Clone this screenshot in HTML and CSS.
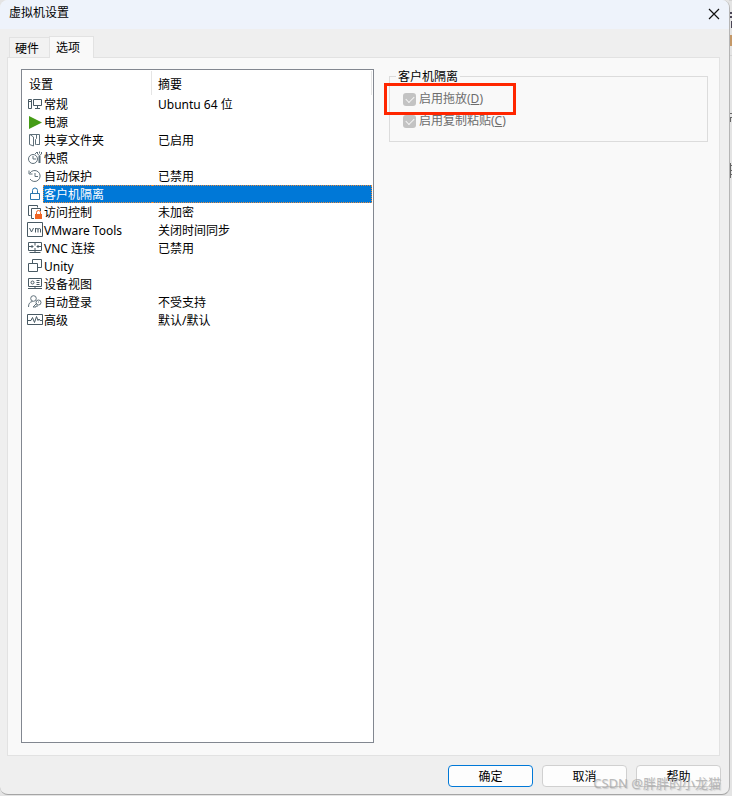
FILE: index.html
```html
<!DOCTYPE html>
<html lang="zh-CN">
<head>
<meta charset="utf-8">
<meta name="viewport" content="width=device-width">
<title>虚拟机设置</title>
<link rel="stylesheet" href="styles.css">
</head>
<body>
<svg class="backdrop" width="4" height="796" viewBox="0 0 4 796" aria-hidden="true"><path fill="#d3d3d3" d="M1 55h3v1H1zM1 0h3v1H1z"/><path fill="#4b4656" d="M1 12h3v2H1zM1 16h3v2H1zM1 21h1v7H1zM3 21h1v7H3z"/><path fill="#c49868" d="M2 35h2v11H2z"/><path fill="#666" d="M1 113h3v1H1zM0 117h4v1H0zM2 118h1v4H2zM1 122h1v2H1zM1 139h1v12H1zM0 165h4v1H0zM0 170h4v1H0zM0 174h4v1H0zM2 163h1v15H2z"/></svg>
<main class="window">
  <header class="titlebar">
    <h1 class="title">虚拟机设置</h1>
    <button class="close" type="button" aria-label="关闭"><svg width="12" height="12" viewBox="0 0 12 12"><path d="M1 1l10 10M11 1L1 11" fill="none" stroke="#111" stroke-width="1.2"/></svg></button>
  </header>
  <nav class="tabs" role="tablist">
    <button class="tab" type="button" role="tab" aria-selected="false">硬件</button>
    <button class="tab tab-active" type="button" role="tab" aria-selected="true">选项</button>
  </nav>
  <section class="panel">
    <div class="list">
      <table class="options">
        <thead><tr><th class="name">设置</th><th>摘要</th></tr></thead>
        <tbody>
          <tr><td class="name"><div class="item"><svg class="icon" viewBox="0 0 16 16"><path d="M1.500 3.500h3v9h-3zM6.500 3.500h8v6h-8zM10.500 9.500v3M8 12.500h5M2 5.500h2"/></svg><span>常规</span></div></td><td>Ubuntu 64 位</td></tr>
          <tr><td class="name"><div class="item"><svg class="icon" viewBox="0 0 16 16"><path class="green" d="M2 2v13l13-6.500z"/></svg><span>电源</span></div></td><td></td></tr>
          <tr><td class="name"><div class="item"><svg class="icon soft" viewBox="0 0 16 16"><path d="M2.500 2.500h10v10h-3M2.500 2.500v10l4 1.500V5L3 2.500M9.500 2.500v4l-1 1v5h1M12.500 4v8.500"/></svg><span>共享文件夹</span></div></td><td>已启用</td></tr>
          <tr><td class="name"><div class="item"><svg class="icon soft" viewBox="0 0 16 16"><circle cx="6" cy="9" r="4.500"/><path d="M6 6v3h3M8 4l2-2M10.500 2v2l2 1.500 2-1.500V2M12.500 1.500v2"/><path d="M12.500 6v7" stroke-width="2"/></svg><span>快照</span></div></td><td></td></tr>
          <tr><td class="name"><div class="item"><svg class="icon soft" viewBox="0 0 16 16"><path d="M3 5a5.500 5.500 0 1 1 0 6M2 2.500V6h3.500M8 5v3.500h3"/></svg><span>自动保护</span></div></td><td>已禁用</td></tr>
          <tr class="selected" aria-selected="true"><td class="name"><div class="item"><svg class="icon blue" viewBox="0 0 16 16"><path d="M3.500 7.500h9v6h-9zM5.500 7.500v-3a2.500 2.500 0 0 1 5 0v3"/></svg><span>客户机隔离</span></div></td><td></td></tr>
          <tr><td class="name"><div class="item"><svg class="icon" viewBox="0 0 16 16"><path d="M3.500 11.500h-2v-10h9v2M7 14.500H4.500v-10h9V7"/><path class="orange" d="M8 10h7v5H8z"/><path class="orange-line" d="M9.500 10V8.500a2 2 0 0 1 4 0V10"/></svg><span>访问控制</span></div></td><td>未加密</td></tr>
          <tr><td class="name"><div class="item"><svg class="icon" viewBox="0 0 16 16"><path d="M.5.500h15v14H.5zM2.500 6l2 4 2-4M8.500 10.500V6M8.500 7q1.500-1 2.500 0v3.500M11 7q1.500-1 2.500 0v3.500"/></svg><span>VMware Tools</span></div></td><td>关闭时间同步</td></tr>
          <tr><td class="name"><div class="item"><svg class="icon" viewBox="0 0 16 16"><path d="M1.500 2.500h13v8h-13zM8 2.500v3M8 8v4.500M2.500 12.500h11M2 6.500h4M10 6.500h4M4.500 5l1.500 1.500L4.500 8M11.500 5L10 6.500 11.500 8"/></svg><span>VNC 连接</span></div></td><td>已禁用</td></tr>
          <tr><td class="name"><div class="item"><svg class="icon" viewBox="0 0 16 16"><path d="M5.500 5.500v-4h9v8h-4M1.500 5.500h9v8h-9z"/></svg><span>Unity</span></div></td><td></td></tr>
          <tr><td class="name"><div class="item"><svg class="icon" viewBox="0 0 16 16"><path d="M1.500 2.500h13v8h-13zM8 10.500v2M1 12.500h14M9.500 4.500h3M9.500 6.500h3M9.500 8.500h3"/><circle cx="5.500" cy="6.500" r="1.500"/></svg><span>设备视图</span></div></td><td></td></tr>
          <tr><td class="name"><div class="item"><svg class="icon soft" viewBox="0 0 16 16"><circle cx="6.500" cy="4.500" r="2.800"/><path d="M1.500 13q0-5 4-5.500M10 9l-4 4h3v-1h2"/><circle cx="11.500" cy="8.500" r="2.500"/><path d="M11 8h1"/></svg><span>自动登录</span></div></td><td>不受支持</td></tr>
          <tr><td class="name"><div class="item"><svg class="icon" viewBox="0 0 16 16"><path d="M.5 2.500h15v10H.5zM1 8.500h3l1.500-3 2 5 2-6 1.500 4 1-1.500 1 1.500h2"/></svg><span>高级</span></div></td><td>默认/默认</td></tr>
        </tbody>
      </table>
    </div>
    <fieldset class="group">
      <legend>客户机隔离</legend>
      <label class="check"><input type="checkbox" checked disabled><span>启用拖放(<u>D</u>)</span></label>
      <label class="check"><input type="checkbox" checked disabled><span>启用复制粘贴(<u>C</u>)</span></label>
      <div class="highlight"></div>
    </fieldset>
  </section>
  <footer class="actions">
    <button class="button primary" type="button">确定</button>
    <button class="button" type="button">取消</button>
    <button class="button" type="button">帮助</button>
    <span class="watermark">CSDN @胖胖的小龙猫</span>
  </footer>
</main>
</body>
</html>
```
FILE: styles.css
```css
* { box-sizing: border-box; }
body {
  margin: 0;
  background: #e4e4e4;
  color: #000;
  font: 12px/18px "Noto Sans", "Noto Sans CJK SC", sans-serif;
}
button { font: inherit; color: inherit; padding: 0; }
.backdrop { position: absolute; right: 0; top: 0; }
.window {
  display: flex;
  flex-direction: column;
  position: relative;
  min-height: calc(100vh - 1px);
  margin-right: 2px;
  background: #efefef;
  border-right: 1px solid #b5b5b5;
  border-bottom: 1px solid #a5a5a5;
  border-radius: 8px;
  overflow: hidden;
}
.titlebar {
  display: flex;
  align-items: center;
  justify-content: space-between;
  height: 29px;
  padding: 0 9px 4px;
  background: #eef3fb;
}
.title { margin: 0; font-size: 12px; font-weight: 400; }
.close { display: flex; border: 0; background: none; margin-top: 3px; }
.tabs { display: flex; align-items: flex-end; height: 29px; padding-left: 9px; margin-bottom: -1px; position: relative; z-index: 1; }
.tab {
  height: 20px;
  padding: 2px 10px 0 5px;
  margin-bottom: 1px;
  border: 1px solid #e2e2e2;
  border-width: 1px 0 0 1px;
  background: #f2f2f2;
}
.tab-active {
  height: 22px;
  padding: 0 13px 0 6px;
  margin-bottom: 0;
  border-width: 1px 1px 0;
  background: #f9f9f9;
}
.panel {
  flex: 1;
  display: grid;
  grid-template-columns: 353fr 319fr;
  column-gap: 15px;
  margin: 0 9px 0 7px;
  padding: 11px 11px 12px 13px;
  border: 1px solid #e2e2e2;
  background: #f9f9f9;
}
.list { border: 1px solid #828790; background: #fff; padding: 1px 1px 0 0; }
.options { width: 100%; border-spacing: 0; table-layout: fixed; }
.options th { height: 24px; padding: 3px 6px 0; line-height: 16px; text-align: left; font-weight: 400; border-right: 1px solid #e5e5e5; }
.options th.name { width: 130px; padding-left: 7px; }
.options td { height: 18px; padding: 2px 6px 0; line-height: 16px; }
.options td.name { padding: 0 0 0 5px; }
.item { display: flex; align-items: center; height: 18px; }
.item span { flex: 1; height: 18px; padding: 2px 0 0 1px; }
.icon { width: 16px; height: 16px; fill: none; stroke: #485963; stroke-width: 1; }
.soft { stroke: #5f707a; }
.blue { stroke: #2a76ad; }
.green { fill: #459c16; stroke: none; }
.orange { fill: #f26522; stroke: none; }
.orange-line { stroke: #f26522; }
.selected { color: #fff; }
.selected .item span, .selected td:last-child {
  background: #0078d7;
  border: 0 dotted #e98b3d;
  border-width: 1px 0;
}
.selected .item span { border-left-width: 1px; padding: 1px 0 0; }
.selected td:last-child { border-right-width: 1px; }
.group {
  align-self: start;
  position: relative;
  min-width: 0;
  height: 74px;
  margin: -1px 0 0;
  padding: 6px 13px 0;
  border: 1px solid #dcdcdc;
}
.group legend { height: 16px; line-height: 18px; margin-left: -7px; padding: 0 2px; }
.check { display: flex; align-items: center; gap: 3px; height: 18px; margin-bottom: 4px; line-height: 20px; color: #6d6d6d; }
.check input {
  appearance: none;
  width: 13px;
  height: 13px;
  margin: 0;
  border-radius: 3px;
  background: #c3c3c3;
  display: grid;
  place-items: center;
}
.check input::after {
  content: "";
  width: 7px;
  height: 4px;
  margin-bottom: 2px;
  border: solid #f5f5f5;
  border-width: 0 0 1px 1px;
  transform: rotate(-45deg);
}
.highlight {
  position: absolute;
  left: -6px;
  top: -1px;
  width: 132px;
  height: 32px;
  border: 3px solid #ff2600;
}
.actions { position: relative; display: flex; justify-content: flex-end; gap: 9px; padding: 9px 8px 7px; }
.button { width: 85px; height: 22px; padding-top: 2px; border: 1px solid #d0d0d0; border-radius: 4px; background: #fdfdfd; }
.primary { border-color: #0078d7; }
.watermark {
  position: absolute;
  right: 8px;
  bottom: 1px;
  font-size: 13px;
  line-height: 20px;
  white-space: nowrap;
  color: rgba(170, 170, 170, .8);
  text-shadow: 1px 1px 1px rgba(120, 120, 120, .3);
  pointer-events: none;
}
```
